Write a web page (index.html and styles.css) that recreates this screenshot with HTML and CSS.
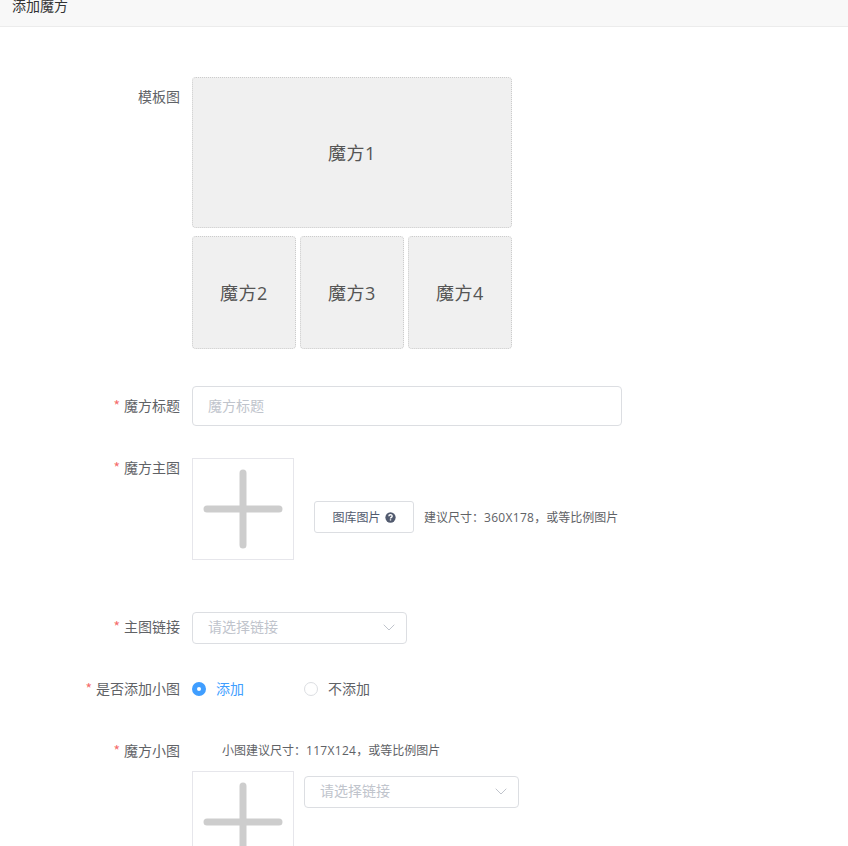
FILE: index.html
```html
<!DOCTYPE html>
<html lang="zh">
<head>
<meta charset="utf-8">
<title>添加魔方</title>
<link rel="stylesheet" href="styles.css">
</head>
<body>
<header class="page-head"><span class="page-title">添加魔方</span></header>
<form class="form">
  <div class="row row-template">
    <label class="label">模板图</label>
    <div class="cube-grid">
      <div class="cube cube-wide">魔方1</div>
      <div class="cube">魔方2</div>
      <div class="cube">魔方3</div>
      <div class="cube">魔方4</div>
    </div>
  </div>
  <div class="row row-title">
    <label class="label"><span class="star">*</span>魔方标题</label>
    <div class="input input-wide"><span class="placeholder">魔方标题</span></div>
  </div>
  <div class="row row-main">
    <label class="label"><span class="star">*</span>魔方主图</label>
    <div class="upload">
      <svg class="plus" viewBox="0 0 100 100"><path d="M50 14v72M14 50h72"/></svg>
    </div>
    <button type="button" class="lib-btn">图库图片
      <svg class="help" viewBox="0 0 12 12"><circle cx="6" cy="6" r="5.600"/><path class="help-mark" d="M4.200 4.700c0-2.300 3.600-2.300 3.600-.1 0 1.300-1.800 1.200-1.800 2.500M6 8v1.400"/></svg>
    </button>
    <span class="hint">建议尺寸：<span class="num">360X178</span>，或等比例图片</span>
  </div>
  <div class="row row-link">
    <label class="label"><span class="star">*</span>主图链接</label>
    <div class="select"><span class="placeholder">请选择链接</span><svg class="arrow" viewBox="0 0 12 7"><path d="M.7.7 6 6l5.300-5.300"/></svg></div>
  </div>
  <div class="row row-radio">
    <label class="label"><span class="star">*</span>是否添加小图</label>
    <span class="radio radio-on"><i class="dot"></i><span class="radio-text">添加</span></span>
    <span class="radio"><i class="dot"></i><span class="radio-text">不添加</span></span>
  </div>
  <div class="row row-small">
    <label class="label"><span class="star">*</span>魔方小图</label>
    <div class="small-body">
      <p class="hint hint-small">小图建议尺寸：<span class="num">117X124</span>，或等比例图片</p>
      <div class="small-controls">
        <div class="upload">
          <svg class="plus" viewBox="0 0 100 100"><path d="M50 14v72M14 50h72"/></svg>
        </div>
        <div class="select"><span class="placeholder">请选择链接</span><svg class="arrow" viewBox="0 0 12 7"><path d="M.7.7 6 6l5.300-5.300"/></svg></div>
      </div>
    </div>
  </div>
</form>
</body>
</html>
```
FILE: styles.css
```css
* { box-sizing: border-box; }
html, body { margin: 0; height: 846px; overflow: hidden; background: #fff; }
body { font-family: "Open Sans", "Noto Sans CJK SC", sans-serif; font-size: 14px; color: #515a6e; }
.page-head { height: 27px; background: #f8f8f8; border-bottom: 1px solid #ececec; padding-left: 12px; }
.page-title { display: block; font-size: 14px; line-height: 12px; color: #333; }
.form { padding-top: 50px; }
.row { display: flex; align-items: flex-start; }
.label { flex: none; width: 192px; padding-right: 12px; text-align: right; font-size: 14px; line-height: 40px; color: #606266; }
.star { color: #f56c6c; margin-right: 4px; font-family: "Noto Sans CJK SC", sans-serif; font-size: 14px; line-height: 0; }
.row-template { height: 272px; }
.cube-grid { display: grid; width: 320px; grid-template-columns: repeat(3, 104px); grid-template-rows: 151px 113px; column-gap: 4px; row-gap: 8px; }
.cube { display: flex; align-items: center; justify-content: center; padding-bottom: 2px; background: #f0f0f0; border: 1px dotted #cccccc; border-radius: 4px; font-size: 18px; letter-spacing: .5px; color: #555; }
.cube-wide { grid-column: 1 / 4; padding-bottom: 2px; }
.row-title { margin-top: 37px; height: 40px; }
.input { height: 40px; border: 1px solid #dcdee2; border-radius: 4px; display: flex; align-items: center; padding: 0 0 2px 15px; }
.input-wide { width: 430px; }
.placeholder { color: #c0c4cc; font-size: 14px; }
.row-main { margin-top: 32px; height: 102px; }
.row-main .label { line-height: 20px; }
.upload { flex: none; width: 102px; height: 102px; border: 1px solid #e6e6eb; background: #fff; }
.plus { display: block; width: 100px; height: 100px; fill: none; stroke: #cdcdcd; stroke-width: 7; stroke-linecap: round; }
.lib-btn { flex: none; margin: 43px 0 0 20px; width: 100px; height: 32px; padding: 0; border: 1px solid #dcdee2; border-radius: 3px; background: #fff; font: inherit; font-size: 12px; color: #515a6e; display: flex; align-items: center; justify-content: center; gap: 4px; }
.help { width: 11px; height: 11px; }
.help circle { fill: #515a6e; }
.help-mark { fill: none; stroke: #fff; stroke-width: 1.500; }
.hint { font-size: 12px; color: #606266; }
.num { letter-spacing: .3px; }
.row-main .hint { margin: 51px 0 0 10px; line-height: 18px; }
.row-link { margin-top: 52px; height: 32px; }
.row-link .label { line-height: 30px; }
.select { position: relative; flex: none; width: 215px; height: 32px; border: 1px solid #dcdee2; border-radius: 4px; padding: 0 0 5px 15px; display: flex; align-items: center; background: #fff; }
.arrow { position: absolute; right: 11px; top: 11px; width: 12px; height: 7px; fill: none; stroke: #c0c4cc; stroke-width: 1; }
.row-radio { margin-top: 30px; height: 30px; }
.row-radio .label { line-height: 30px; }
.radio { display: flex; align-items: center; width: 112px; height: 30px; font-size: 14px; color: #606266; }
.radio-text { padding-bottom: 2px; }
.dot { flex: none; width: 14px; height: 14px; margin-right: 10px; border: 1px solid #dcdee2; border-radius: 50%; background: #fff; }
.radio-on { color: #409eff; }
.radio-on .dot { border: 5px solid #409eff; }
.row-small { margin-top: 37px; }
.row-small .label { line-height: 20px; }
.hint-small { margin: 1px 0 11px 30px; line-height: 18px; }
.small-controls { display: flex; align-items: flex-start; gap: 10px; }
.small-controls .select { margin-top: 5px; }
```
